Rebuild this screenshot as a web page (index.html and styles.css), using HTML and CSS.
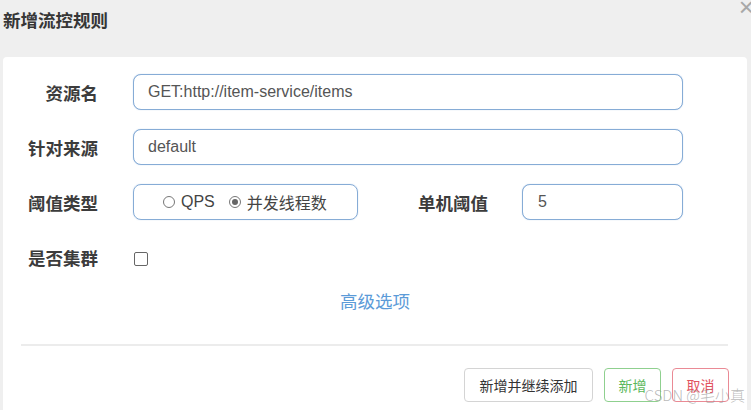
FILE: index.html
```html
<!DOCTYPE html>
<html>
<head>
    <meta charset="UTF-8" />
    <title>新增流控规则</title>
    <link rel="stylesheet" href="styles.css">
</head>
<body>
    <div class="dialog">
        <div class="dialog-header">
            <h4>新增流控规则</h4>
            <span class="close">×</span>
        </div>

        <div class="dialog-body">
            <div class="form-row">
                <label class="form-label">资源名</label>
                <input class="form-input wide" type="text" value="GET:http://item-service/items">
            </div>

            <div class="form-row">
                <label class="form-label">针对来源</label>
                <input class="form-input wide" type="text" value="default">
            </div>

            <div class="form-row">
                <label class="form-label">阈值类型</label>
                <div class="radio-box">
                    <span class="radio-item"><span class="radio"></span>QPS</span>
                    <span class="radio-item"><span class="radio checked"></span>并发线程数</span>
                </div>
                <label class="form-label inline">单机阈值</label>
                <input class="form-input small" type="text" value="5">
            </div>

            <div class="form-row">
                <label class="form-label">是否集群</label>
                <span class="checkbox"></span>
            </div>

            <div class="advanced">
                <a href="#">高级选项</a>
            </div>

            <div class="divider"></div>

            <div class="dialog-footer">
                <button class="btn btn-default">新增并继续添加</button>
                <button class="btn btn-success">新增</button>
                <button class="btn btn-danger">取消</button>
            </div>
        </div>

        <span class="watermark">CSDN @毛小真</span>
    </div>
</body>
</html>
```

FILE: styles.css
```css
:root {
    --text: #3a3a3a;
    --input-border: #86acd6;
    --link: #5b9bd8;
    --background: #efefef;
}

body {
    margin: 0;
    background: var(--background);
    font-family: "Liberation Sans", "Noto Sans CJK SC", sans-serif;
    color: var(--text);
    overflow: hidden;
}

.dialog {
    position: relative;
    height: 410px;
}

.dialog-header {
    position: relative;
    height: 57px;
    padding-left: 3px;
    box-sizing: border-box;
}

.dialog-header h4 {
    margin: 0;
    padding-top: 10px;
    font-size: 17.5px;
    line-height: 20px;
    font-weight: 700;
    font-family: "Noto Sans CJK SC", sans-serif;
    color: #363636;
}

.close {
    position: absolute;
    top: -6px;
    right: -3px;
    font-size: 26px;
    line-height: 26px;
    color: #a8a8a8;
}

.dialog-body {
    margin: 0 4px 0 3px;
    background: #fff;
    border-radius: 4px 4px 0 0;
    padding-top: 17px;
    height: 360px;
    box-sizing: border-box;
}

.form-row {
    display: flex;
    align-items: center;
    height: 36px;
    margin-bottom: 19px;
}

.form-label {
    width: 95px;
    margin-right: 35px;
    text-align: right;
    font-family: "Noto Sans CJK SC", sans-serif;
    font-weight: 700;
    font-size: 17.5px;
    color: #3c3c3c;
    flex-shrink: 0;
}

.form-label.inline {
    width: 71px;
    margin-left: 59px;
    margin-right: 34px;
}

.form-input {
    height: 36px;
    box-sizing: border-box;
    border: 1px solid var(--input-border);
    border-radius: 8px;
    box-shadow: 0 0 1px rgba(102, 150, 210, 0.6);
    padding: 0 14px;
    font-family: "Liberation Sans", sans-serif;
    font-size: 16px;
    color: #555;
    outline: none;
}

.form-input.wide {
    width: 550px;
}

.form-input.small {
    width: 161px;
    padding-left: 15px;
}

.radio-box {
    width: 225px;
    height: 36px;
    box-sizing: border-box;
    border: 1px solid var(--input-border);
    border-radius: 8px;
    box-shadow: 0 0 1px rgba(102, 150, 210, 0.6);
    display: flex;
    align-items: center;
    padding-left: 29px;
    gap: 14px;
    font-size: 16px;
    color: #444;
}

.radio-item {
    display: flex;
    align-items: center;
}

.radio {
    width: 12px;
    height: 12px;
    box-sizing: border-box;
    border: 1px solid #777;
    border-radius: 50%;
    margin-right: 6px;
    position: relative;
}

.radio.checked::after {
    content: "";
    position: absolute;
    left: 2px;
    top: 2px;
    width: 6px;
    height: 6px;
    border-radius: 50%;
    background: #666;
}

.checkbox {
    width: 12px;
    height: 12px;
    margin-left: 1px;
    border: 1px solid #666;
    border-radius: 2px;
    margin-top: 3px;
}

.advanced {
    text-align: center;
    margin-top: -11px;
    line-height: 36px;
}

.advanced a {
    font-family: "Noto Sans CJK SC", sans-serif;
    font-size: 17.5px;
    color: var(--link);
    text-decoration: none;
}

.divider {
    height: 2px;
    background: #ececec;
    margin: 23px 19px 0 18px;
}

.dialog-footer {
    display: flex;
    justify-content: flex-end;
    gap: 11px;
    margin: 22px 18px 0 0;
}

.btn {
    height: 34px;
    padding: 0 13.5px;
    background: #fff;
    border: 1px solid #d4d4d4;
    border-radius: 4px;
    font-family: "Noto Sans CJK SC", sans-serif;
    font-size: 14px;
    color: #333;
    cursor: pointer;
}

.btn-default {
    padding: 0 14.5px;
}

.btn-success {
    border-color: #8fd08f;
    color: #5cb85c;
}

.btn-danger {
    border-color: #ea8a95;
    color: #e2545f;
}

.watermark {
    position: absolute;
    right: 6px;
    bottom: 5px;
    font-family: "Noto Sans CJK SC", sans-serif;
    font-size: 15px;
    font-weight: 300;
    color: rgba(140, 140, 140, 0.6);
}
```
